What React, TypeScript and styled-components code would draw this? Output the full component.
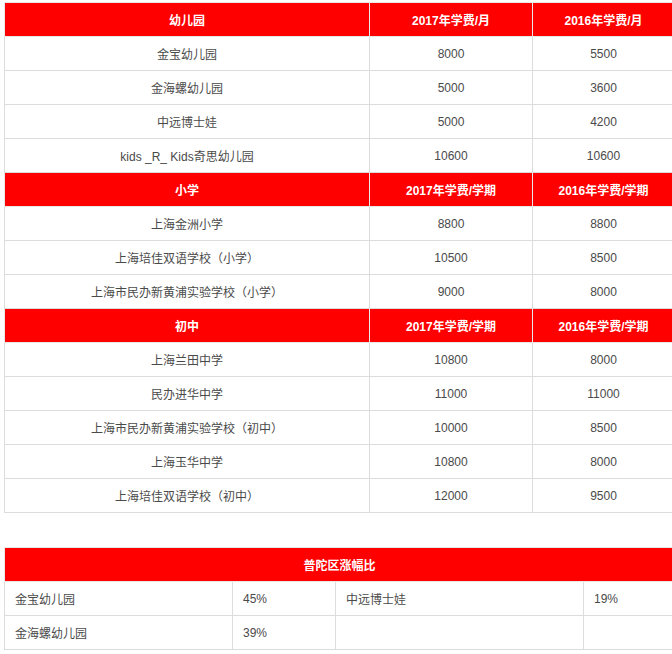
import React from "react";
import styled, { createGlobalStyle } from "styled-components";

const Global = createGlobalStyle`
  html, body { margin: 0; padding: 0; background: #fff; overflow: hidden; }
  body { font-family: "Liberation Sans", Arial, "Noto Sans CJK SC", sans-serif; }
`;

const Page = styled.div`
  width: 672px;
  height: 654px;
  overflow: hidden;
  padding: 2px 0 0 4px;
  box-sizing: border-box;
  display: flex;
  flex-direction: column;
  gap: 34px;
`;

const Table = styled.table`
  border-collapse: collapse;
  width: 670px;
  table-layout: fixed;
  font-size: 12px;
  color: #444;
`;

const Head = styled.td`
  background: #ff0000;
  color: #fff;
  font-weight: bold;
  text-align: center;
  height: 33px;
  padding: 0;
  border: 1px solid #e8e8e8;
  font-size: 12px;
`;

const Cell = styled.td<{ $left?: boolean }>`
  height: 33px;
  padding: 0 ${(p) => (p.$left ? "10px" : "0")};
  text-align: ${(p) => (p.$left ? "left" : "center")};
  border: 1px solid #dcdcdc;
  color: #4a4a4a;
`;

type Section = { title: string; y17: string; y16: string; rows: [string, string, string][] };

const sections: Section[] = [
  {
    title: "幼儿园",
    y17: "2017年学费/月",
    y16: "2016年学费/月",
    rows: [
      ["金宝幼儿园", "8000", "5500"],
      ["金海螺幼儿园", "5000", "3600"],
      ["中远博士娃", "5000", "4200"],
      ["kids _R_ Kids奇思幼儿园", "10600", "10600"],
    ],
  },
  {
    title: "小学",
    y17: "2017年学费/学期",
    y16: "2016年学费/学期",
    rows: [
      ["上海金洲小学", "8800", "8800"],
      ["上海培佳双语学校（小学）", "10500", "8500"],
      ["上海市民办新黄浦实验学校（小学）", "9000", "8000"],
    ],
  },
  {
    title: "初中",
    y17: "2017年学费/学期",
    y16: "2016年学费/学期",
    rows: [
      ["上海兰田中学", "10800", "8000"],
      ["民办进华中学", "11000", "11000"],
      ["上海市民办新黄浦实验学校（初中）", "10000", "8500"],
      ["上海玉华中学", "10800", "8000"],
      ["上海培佳双语学校（初中）", "12000", "9500"],
    ],
  },
];

export default function App() {
  return (
    <>
      <Global />
      <Page>
        <Table>
          <colgroup>
            <col style={{ width: 365 }} />
            <col style={{ width: 163 }} />
            <col style={{ width: 142 }} />
          </colgroup>
          <tbody>
            {sections.map((s) => (
              <React.Fragment key={s.title}>
                <tr>
                  <Head>{s.title}</Head>
                  <Head>{s.y17}</Head>
                  <Head>{s.y16}</Head>
                </tr>
                {s.rows.map((r) => (
                  <tr key={r[0]}>
                    <Cell>{r[0]}</Cell>
                    <Cell>{r[1]}</Cell>
                    <Cell>{r[2]}</Cell>
                  </tr>
                ))}
              </React.Fragment>
            ))}
          </tbody>
        </Table>
        <Table>
          <colgroup>
            <col style={{ width: 228 }} />
            <col style={{ width: 103 }} />
            <col style={{ width: 248 }} />
            <col style={{ width: 91 }} />
          </colgroup>
          <tbody>
            <tr>
              <Head colSpan={4}>普陀区涨幅比</Head>
            </tr>
            <tr>
              <Cell $left>金宝幼儿园</Cell>
              <Cell $left>45%</Cell>
              <Cell $left>中远博士娃</Cell>
              <Cell $left>19%</Cell>
            </tr>
            <tr>
              <Cell $left>金海螺幼儿园</Cell>
              <Cell $left>39%</Cell>
              <Cell $left></Cell>
              <Cell $left></Cell>
            </tr>
          </tbody>
        </Table>
      </Page>
    </>
  );
}
